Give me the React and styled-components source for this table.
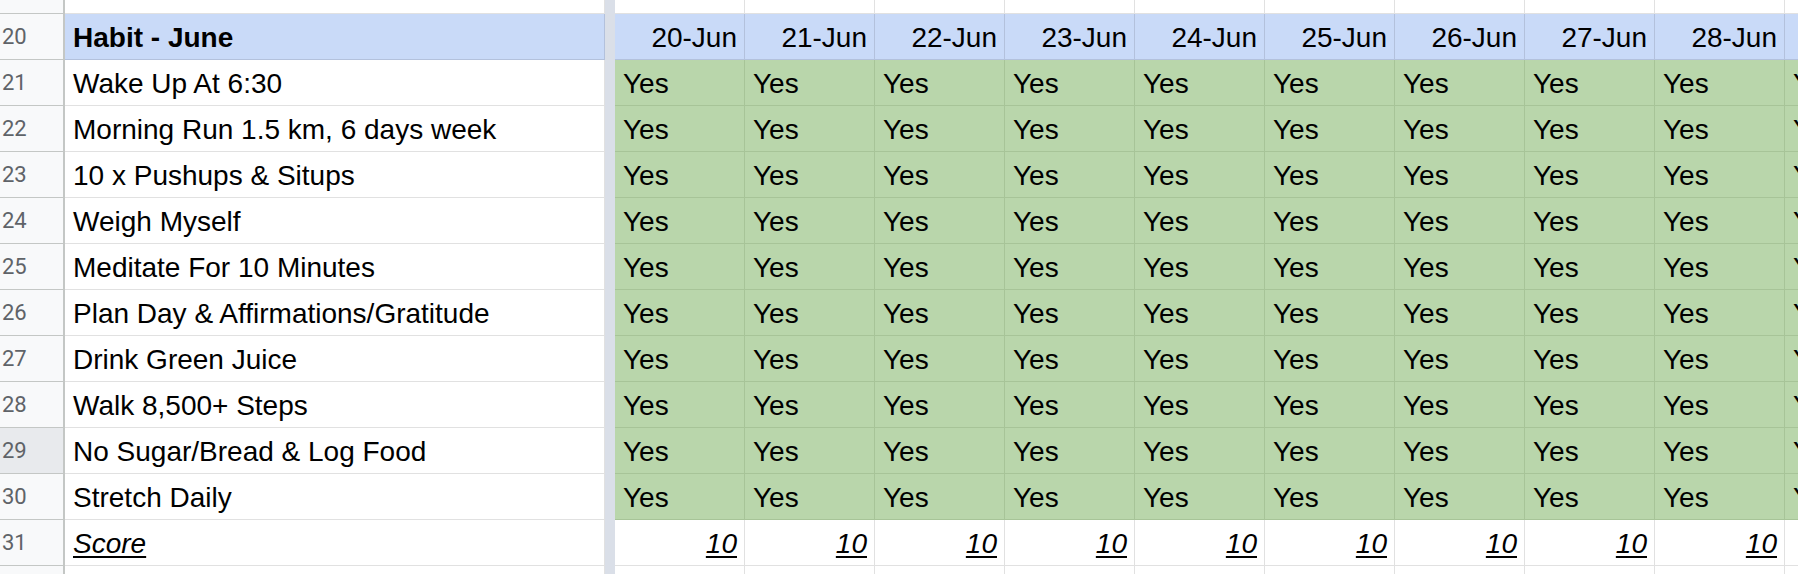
import React from "react";
import styled, { createGlobalStyle, css } from "styled-components";

const GlobalStyle = createGlobalStyle`
  html, body {
    margin: 0;
    padding: 0;
    background: #ffffff;
    overflow: hidden;
  }
`;

const habits = [
  "Wake Up At 6:30",
  "Morning Run 1.5 km, 6 days week",
  "10 x Pushups & Situps",
  "Weigh Myself",
  "Meditate For 10 Minutes",
  "Plan Day & Affirmations/Gratitude",
  "Drink Green Juice",
  "Walk 8,500+ Steps",
  "No Sugar/Bread & Log Food",
  "Stretch Daily",
];

const days = [20, 21, 22, 23, 24, 25, 26, 27, 28, 29];

const Sheet = styled.div`
  width: 1798px;
  height: 574px;
  overflow: hidden;
  display: grid;
  grid-template-columns: 65px 540px 10px repeat(10, 130px);
  grid-template-rows: 14px repeat(12, 46px) 40px;
  font-family: "Liberation Sans", Arial, sans-serif;
  color: #000000;
`;

const RowHead = styled.div`
  box-sizing: border-box;
  background: ${(p) => (p.$active ? "#e8eaed" : "#f8f9fa")};
  border-right: 2px solid #c4c7c5;
  border-bottom: 1px solid #c4c7c5;
  font-family: Roboto, "Liberation Sans", sans-serif;
  font-size: 22px;
  color: #5f6368;
  padding-left: 2px;
  display: flex;
  align-items: flex-end;
  line-height: 44px;
  overflow: hidden;
`;

const Divider = styled.div`
  background: #dadfe8;
`;

const variants = {
  plain: css`
    background: #ffffff;
    border-right: 1px solid #e1e1e1;
    border-bottom: 1px solid #e1e1e1;
  `,
  head: css`
    background: #c9daf8;
    border-right: 1px solid #b3c1dc;
    border-bottom: 1px solid #b3c1dc;
  `,
  done: css`
    background: #b9d6ab;
    border-right: 1px solid #a7c498;
    border-bottom: 1px solid #a7c498;
  `,
};

const Cell = styled.div`
  box-sizing: border-box;
  ${(p) => variants[p.$kind || "plain"]}
  font-size: 28px;
  line-height: 42px;
  padding: 0 7px 0 8px;
  display: flex;
  align-items: flex-end;
  justify-content: ${(p) => (p.$right ? "flex-end" : "flex-start")};
  white-space: nowrap;
  overflow: hidden;
  font-weight: ${(p) => (p.$bold ? 700 : 400)};
`;

const Score = styled.span`
  font-style: italic;
  text-decoration: underline;
  text-underline-offset: 3px;
`;

function EmptyRow({ num, active }) {
  return (
    <>
      <RowHead $active={active}>{num}</RowHead>
      <Cell />
      <Divider />
      {days.map((d) => (
        <Cell key={d} />
      ))}
    </>
  );
}

export default function App() {
  return (
    <>
      <GlobalStyle />
      <Sheet>
        <EmptyRow num={19} />

        <RowHead>20</RowHead>
        <Cell $kind="head" $bold>
          Habit - June
        </Cell>
        <Divider />
        {days.map((d) => (
          <Cell key={d} $kind="head" $right>
            {d}-Jun
          </Cell>
        ))}

        {habits.map((h, i) => (
          <React.Fragment key={h}>
            <RowHead $active={i === 8}>{21 + i}</RowHead>
            <Cell>{h}</Cell>
            <Divider />
            {days.map((d) => (
              <Cell key={d} $kind="done">
                Yes
              </Cell>
            ))}
          </React.Fragment>
        ))}

        <RowHead>31</RowHead>
        <Cell>
          <Score>Score</Score>
        </Cell>
        <Divider />
        {days.map((d) => (
          <Cell key={d} $right>
            <Score>10</Score>
          </Cell>
        ))}

        <EmptyRow num={32} />
      </Sheet>
    </>
  );
}
